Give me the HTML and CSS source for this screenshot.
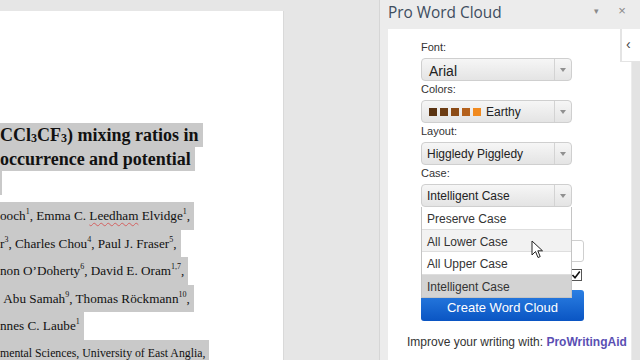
FILE: index.html
```html
<!DOCTYPE html>
<html lang="en">
<head>
    <meta charset="UTF-8">
    <title>Pro Word Cloud</title>
    <link rel="stylesheet" href="styles.css">
</head>
<body>
    <div class="app">
        <div class="doc-area">
            <div class="page">
                <div class="title">
                    <div class="hl">CCl<sub>3</sub>CF<sub>3</sub>) mixing ratios in</div>
                    <div class="hl">occurrence and potential</div>
                    <div class="hl empty">&nbsp;</div>
                </div>
                <div class="authors">
                    <div class="hl">ooch<sup>1</sup>, Emma C. <span class="spell">Leedham</span> Elvidge<sup>1</sup>,</div>
                    <div class="hl">r<sup>3</sup>, Charles Chou<sup>4</sup>, Paul J. Fraser<sup>5</sup>,</div>
                    <div class="hl">non O’Doherty<sup>6</sup>, David E. Oram<sup>1,7</sup>,</div>
                    <div class="hl">&nbsp;Abu Samah<sup>9</sup>, Thomas Röckmann<sup>10</sup>,</div>
                    <div class="hl">nnes C. Laube<sup>1</sup></div>
                    <div class="hl small">mental Sciences, University of East Anglia,</div>
                </div>
            </div>
        </div>

        <div class="pane">
            <div class="pane-head">
                <span class="pane-title">Pro Word Cloud</span>
                <span class="head-btn">&#9662;</span>
                <span class="head-btn close">&times;</span>
            </div>
            <div class="pane-body">
                <div class="form">
                    <label>Font:</label>
                    <div class="select big"><span class="value">Arial</span><span class="arrow"></span></div>

                    <label>Colors:</label>
                    <div class="select">
                        <span class="value">
                            <span class="swatch s1"></span><span class="swatch s2"></span><span class="swatch s3"></span><span class="swatch s4"></span><span class="swatch s5"></span>
                            Earthy
                        </span>
                        <span class="arrow"></span>
                    </div>

                    <label>Layout:</label>
                    <div class="select"><span class="value">Higgledy Piggledy</span><span class="arrow"></span></div>

                    <label>Case:</label>
                    <div class="case-wrap">
                        <div class="select"><span class="value">Intelligent Case</span><span class="arrow"></span></div>
                        <ul class="dropdown">
                            <li>Preserve Case</li>
                            <li class="hover">All Lower Case</li>
                            <li>All Upper Case</li>
                            <li class="selected">Intelligent Case</li>
                        </ul>
                        <svg class="cursor" width="13" height="20" viewBox="0 0 13 20">
                            <path d="M1 1 L1 15 L4.5 11.5 L7 17.5 L9.2 16.6 L6.8 10.8 L11.5 10.8 Z" fill="#fff" stroke="#222" stroke-width="1"/>
                        </svg>
                    </div>

                    <!-- campos tapados por la lista desplegable -->
                    <div class="spacer"></div>
                    <div class="text-input"></div>
                    <div class="check-row">
                        <span class="checkbox">
                            <svg width="10" height="10" viewBox="0 0 10 10"><path d="M1.5 5 L4 7.8 L8.8 1.5" fill="none" stroke="#111" stroke-width="1.6"/></svg>
                        </span>
                    </div>
                    <button class="create">Create Word Cloud</button>
                </div>
                <p class="promo">Improve your writing with: <span class="brand">ProWritingAid</span></p>
                <div class="scroll-strip"></div>
                <div class="collapse-tab">&#8249;</div>
            </div>
        </div>
    </div>
</body>
</html>
```

FILE: styles.css
```css
html, body {
    margin: 0;
    padding: 0;
}
body {
    width: 640px;
    height: 360px;
    overflow: hidden;
    background-color: #e6e6e6;
}
.app {
    display: flex;
    height: 360px;
}

/* documento */
.doc-area {
    width: 380px;
    padding-top: 11px;
    border-right: 1px solid #d6d6d6;
    box-sizing: border-box;
}
.page {
    width: 284px;
    height: 349px;
    background-color: #fff;
    border-right: 1px solid #d9d9d9;
    box-sizing: border-box;
    overflow: hidden;
    font-family: "Liberation Serif", "Times New Roman", serif;
    color: #111;
}
.hl {
    background-color: #c9c9c9;
    width: fit-content;
    white-space: nowrap;
    padding-right: 4px;
}
.title {
    margin-top: 112px;
    font-size: 18px;
    font-weight: bold;
    line-height: 24px;
}
.title sub {
    font-size: 12px;
    line-height: 0;
    vertical-align: -1px;
}
.hl.empty {
    width: 2px;
    padding: 0;
    overflow: hidden;
}
.authors {
    margin-top: 7px;
    font-size: 13.2px;
    line-height: 27.5px;
}
.authors sup {
    font-size: 8px;
    line-height: 0;
    vertical-align: 6px;
}
.hl.small {
    font-size: 11.8px;
}
.spell {
    text-decoration: underline wavy #d36060;
    text-decoration-thickness: 1px;
    text-underline-offset: 2px;
}

/* panel */
.pane {
    flex: 1;
    background-color: #ececec;
    display: flex;
    flex-direction: column;
    padding-left: 6px;
    font-family: "Liberation Sans", Arial, sans-serif;
}
.pane-head {
    height: 29px;
    display: flex;
    align-items: center;
    padding-left: 2px;
}
.pane-title {
    flex: 1;
    font-family: "Open Sans", "Noto Sans", sans-serif;
    font-size: 15.4px;
    color: #3e4d5e;
    margin-top: -5px;
}
.head-btn {
    color: #8a8a8a;
    font-size: 9px;
    width: 28px;
    text-align: center;
    margin-top: -8px;
}
.head-btn.close {
    font-size: 13px;
    width: 24px;
    margin-right: 6px;
}
.pane-body {
    flex: 1;
    position: relative;
    background-color: #fff;
    margin-left: 2px;
}
.scroll-strip {
    position: absolute;
    right: 0;
    top: 0;
    bottom: 0;
    width: 8px;
    background-color: #e3e3e3;
    border-left: 1px solid #ececec;
}
.collapse-tab {
    position: absolute;
    right: 0;
    top: 0;
    width: 14px;
    height: 32px;
    padding-left: 4px;
    background-color: #fff;
    border-left: 2px solid #e4e4e4;
    border-bottom: 1px solid #e4e4e4;
    color: #444;
    font-size: 14px;
    line-height: 30px;
}

.form {
    padding: 10px 0 0 33px;
    width: 163px;
    font-size: 11px;
    color: #333;
}
.form label {
    display: block;
    height: 19px;
    line-height: 17px;
}
.select {
    width: 151px;
    height: 23px;
    box-sizing: border-box;
    border: 1px solid #cfcfcf;
    border-radius: 4px;
    background: linear-gradient(#f6f6f6, #e4e4e4);
    display: flex;
    align-items: center;
    font-size: 12px;
    color: #222;
}
.select .value {
    flex: 1;
    padding-left: 5px;
    display: flex;
    align-items: center;
}
.select.big .value {
    font-size: 14px;
    padding-left: 7px;
    padding-top: 2px;
}
.select .arrow {
    width: 16px;
    height: 100%;
    border-left: 1px solid #d3d3d3;
    position: relative;
}
.select .arrow::after {
    content: "";
    position: absolute;
    left: 5px;
    top: 9px;
    border-left: 3px solid transparent;
    border-right: 3px solid transparent;
    border-top: 4px solid #909090;
}
.swatch {
    width: 8px;
    height: 8px;
    margin-right: 3px;
    display: inline-block;
}
.swatch.s1 { background-color: #5a3311; margin-left: 2px; }
.swatch.s2 { background-color: #6d3d13; }
.swatch.s3 { background-color: #8c4b16; }
.swatch.s4 { background-color: #b4611c; }
.swatch.s5 { background-color: #f18a1f; margin-right: 5px; }

.case-wrap {
    position: relative;
}
.dropdown {
    position: absolute;
    left: 0;
    top: 23px;
    width: 151px;
    margin: 0;
    padding: 0;
    list-style: none;
    background-color: #fff;
    border: 1px solid #c4c4c4;
    border-top: none;
    box-sizing: border-box;
    z-index: 2;
    font-size: 12px;
    color: #333;
}
.dropdown li {
    height: 22.5px;
    line-height: 20px;
    padding: 2px 0 0 5px;
    border-bottom: 1px solid #dedede;
    box-sizing: border-box;
}
.dropdown li:last-child {
    border-bottom: none;
}
.dropdown li.hover {
    background-color: #f2f2f2;
}
.dropdown li.selected {
    background-color: #d3d3d3;
}
.cursor {
    position: absolute;
    left: 110px;
    top: 56px;
    z-index: 3;
}
.spacer {
    height: 33px;
}
.text-input {
    height: 22px;
    width: 163px;
    box-sizing: border-box;
    border: 1px solid #cfcfcf;
    border-radius: 3px;
}
.check-row {
    display: flex;
    align-items: center;
    justify-content: flex-end;
    margin-top: 7px;
    height: 12px;
    width: 161px;
}
.checkbox {
    width: 10px;
    height: 10px;
    border: 1px solid #555;
    background-color: #fff;
    display: flex;
}
.create {
    display: block;
    margin-top: 9px;
    width: 163px;
    height: 31px;
    border: none;
    border-radius: 3px;
    background: linear-gradient(#2b7fe3, #0a55c3);
    color: #fff;
    font-family: "Liberation Sans", Arial, sans-serif;
    font-size: 13px;
    padding: 3px 0 0;
}
.promo {
    margin: 14px 0 0 19px;
    font-size: 12px;
    color: #333;
}
.brand {
    color: #5a4fb3;
    font-weight: bold;
}
```
